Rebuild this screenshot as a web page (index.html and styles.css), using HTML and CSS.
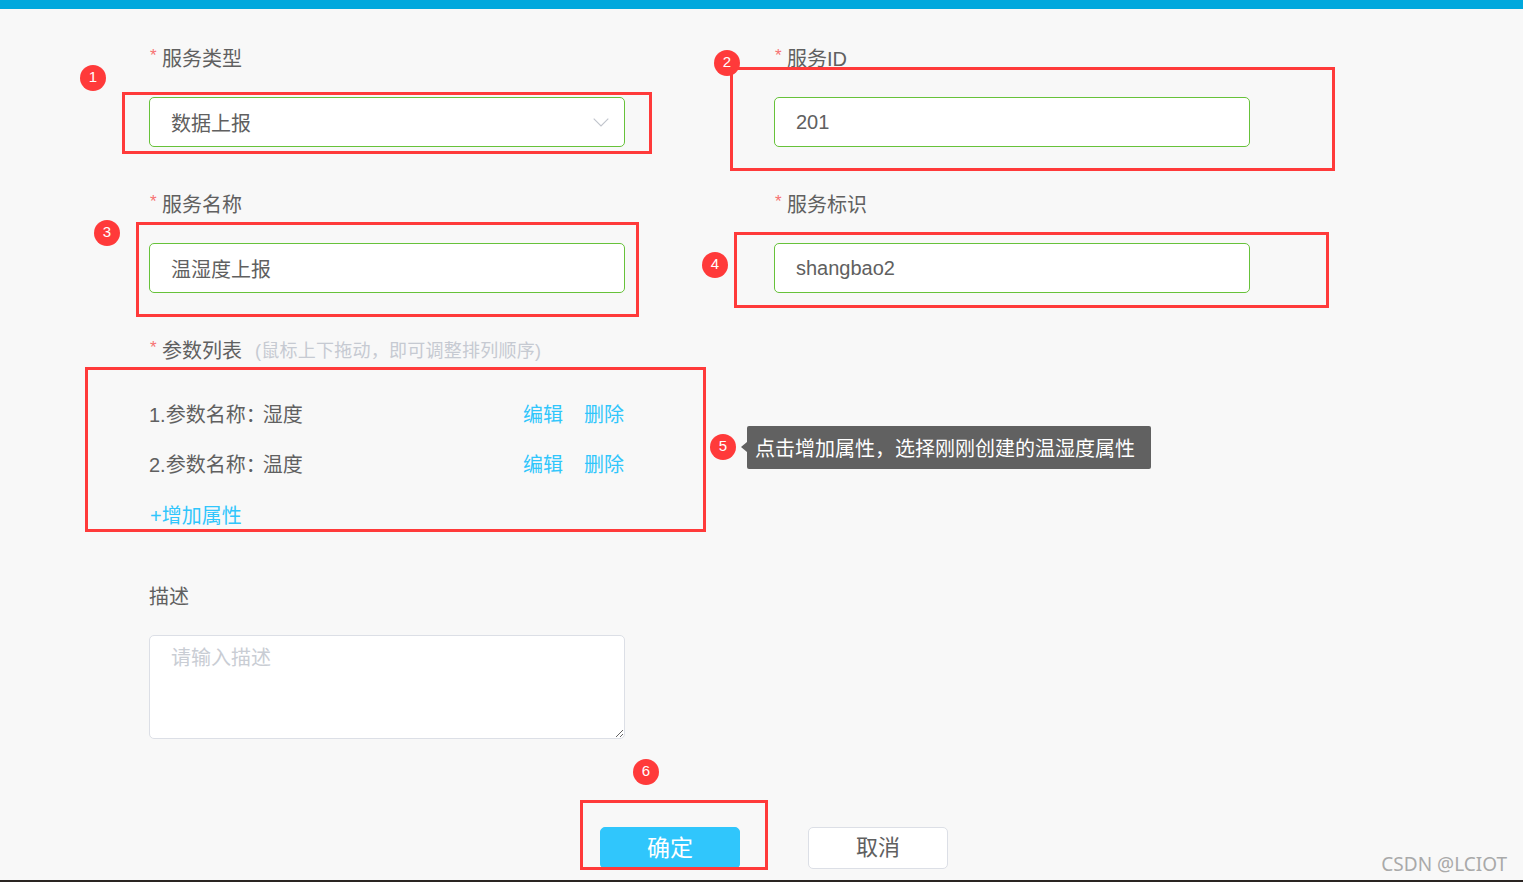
FILE: index.html
```html
<!DOCTYPE html>
<html lang="zh-CN">
<head>
<meta charset="utf-8">
<title>服务</title>
<link rel="stylesheet" href="styles.css">
</head>
<body>
<div class="topbar"></div>
<main class="page">
  <form class="form">
    <div class="field">
      <div class="label"><span class="req">*</span>服务类型</div>
      <div class="control select">
        <span class="select-value">数据上报</span>
        <svg class="chevron" width="16" height="9" viewBox="0 0 16 9"><path d="M.7.7 8 8l7.3-7.3" fill="none" stroke="#c0c4cc" stroke-width="1.1"/></svg>
      </div>
    </div>
    <div class="field">
      <div class="label"><span class="req">*</span>服务ID</div>
      <input class="control" value="201">
    </div>
    <div class="field">
      <div class="label"><span class="req">*</span>服务名称</div>
      <input class="control" value="温湿度上报">
    </div>
    <div class="field">
      <div class="label"><span class="req">*</span>服务标识</div>
      <input class="control" value="shangbao2">
    </div>
    <section class="params">
      <div class="label"><span class="req">*</span>参数列表<span class="hint">(鼠标上下拖动，即可调整排列顺序)</span></div>
      <div class="param-row"><span>1.参数名称<span class="colon">：</span>湿度</span><span class="actions"><a>编辑</a><a>删除</a></span></div>
      <div class="param-row"><span>2.参数名称<span class="colon">：</span>温度</span><span class="actions"><a>编辑</a><a>删除</a></span></div>
      <a class="add">+增加属性</a>
    </section>
    <section class="desc">
      <div class="label">描述</div>
      <textarea class="textarea" placeholder="请输入描述"></textarea>
    </section>
    <div class="buttons">
      <button type="button" class="btn primary">确定</button>
      <button type="button" class="btn">取消</button>
    </div>
  </form>
</main>
<div class="bottomline"></div>

<div class="mark m1"></div>
<div class="mark m2"></div>
<div class="mark m3"></div>
<div class="mark m4"></div>
<div class="mark m5"></div>
<div class="mark m6"></div>
<div class="badge b1">1</div>
<div class="badge b2">2</div>
<div class="badge b3">3</div>
<div class="badge b4">4</div>
<div class="badge b5">5</div>
<div class="badge b6">6</div>
<div class="tip">点击增加属性，选择刚刚创建的温湿度属性</div>
<div class="watermark">CSDN @LCIOT</div>
</body>
</html>
```
FILE: styles.css
```css
* { box-sizing: border-box; }
html, body { margin: 0; height: 882px; overflow: hidden; }
body {
  position: relative;
  display: flex;
  flex-direction: column;
  background: #f8f8f8;
  color: #606060;
  font: 20px/42px "Liberation Sans", "Noto Sans CJK SC", sans-serif;
}
.topbar { height: 9px; background: #00a8dd; flex: none; }
.page { flex: 1; padding: 29px 0 0 149px; }
.bottomline { height: 2px; background: #2a2522; flex: none; }

.form { display: grid; grid-template-columns: 476px 476px; column-gap: 149px; }
.field { margin-bottom: 37px; }
.label { height: 40px; margin-bottom: 19px; white-space: nowrap; }
.req {
  display: inline-block;
  width: 13px;
  padding-left: 1px;
  color: #f77272;
  font-size: 17px;
  line-height: 36px;
  vertical-align: top;
}
.control {
  display: block;
  width: 476px;
  height: 50px;
  padding: 0 21px;
  background: #fff;
  border: 1px solid #67c23a;
  border-radius: 5px;
  color: #606060;
  font: 20px/48px "Liberation Sans", "Noto Sans CJK SC", sans-serif;
  outline: none;
}
.select { display: flex; align-items: center; justify-content: space-between; padding-right: 15px; }
.select-value { padding-top: 4px; }
.chevron { display: block; }

.params { grid-column: 1; margin-bottom: 41px; }
.params .label { margin-bottom: 24px; }
.hint { margin-left: 13px; color: #c6cad2; font-size: 18px; line-height: 1; letter-spacing: .25px; vertical-align: 1px; }
.param-row { display: flex; justify-content: space-between; height: 40px; margin-bottom: 10px; width: 476px; }
.colon { margin-right: -3px; }
.actions { display: flex; gap: 21px; padding-right: 1px; }
.actions a, .add { color: #30c6fc; }
.add { display: block; height: 40px; margin-top: 11px; padding-left: 1px; }

.desc { grid-column: 1; }
.textarea {
  display: block;
  width: 476px;
  height: 104px;
  padding: 4px 21px;
  background: #fff;
  border: 1px solid #dcdfe6;
  border-radius: 5px;
  font: 20px/36px "Liberation Sans", "Noto Sans CJK SC", sans-serif;
  color: #606060;
  outline: none;
  resize: vertical;
}
.textarea::placeholder { color: #c9cdd4; opacity: 1; }

.buttons { grid-column: 1 / -1; display: flex; gap: 68px; margin: 88px 0 0 451px; }
.btn {
  width: 140px;
  height: 42px;
  padding: 0;
  background: #fff;
  border: 1px solid #dcdfe6;
  border-radius: 5px;
  color: #606060;
  font: 22px/40px "Liberation Sans", "Noto Sans CJK SC", sans-serif;
}
.btn.primary { background: #30c6fc; border-color: #30c6fc; color: #fff; font-size: 23px; }

.mark { position: absolute; border: 3px solid #ff3a3a; }
.m1 { left: 122px; top: 92px; width: 530px; height: 62px; }
.m2 { left: 730px; top: 67px; width: 605px; height: 104px; }
.m3 { left: 136px; top: 222px; width: 503px; height: 95px; }
.m4 { left: 734px; top: 232px; width: 595px; height: 76px; }
.m5 { left: 85px; top: 367px; width: 621px; height: 165px; }
.m6 { left: 580px; top: 800px; width: 188px; height: 70px; }

.badge {
  position: absolute;
  width: 26px;
  height: 26px;
  border-radius: 50%;
  background: #ff3a3a;
  color: #fff;
  font: 15px/24px "Liberation Sans", sans-serif;
  text-align: center;
}
.b1 { left: 80px; top: 65px; }
.b2 { left: 714px; top: 50px; }
.b3 { left: 94px; top: 220px; }
.b4 { left: 702px; top: 252px; }
.b5 { left: 710px; top: 434px; }
.b6 { left: 633px; top: 759px; }

.tip {
  position: absolute;
  left: 747px;
  top: 426px;
  width: 404px;
  height: 43px;
  padding-left: 8px;
  background: #616161;
  border-radius: 2px;
  color: #fff;
  line-height: 46px;
  white-space: nowrap;
}
.tip::before {
  content: "";
  position: absolute;
  left: -6px;
  top: 16px;
  border: 5px solid transparent;
  border-left-width: 0;
  border-right: 6px solid #616161;
}
.watermark {
  position: absolute;
  right: 16px;
  top: 850px;
  color: #a9a9a9;
  font: 19px/28px "Noto Sans", sans-serif;
  white-space: nowrap;
}
```
